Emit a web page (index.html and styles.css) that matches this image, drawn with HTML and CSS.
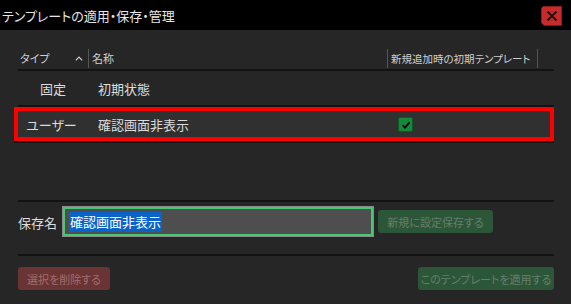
FILE: index.html
```html
<!DOCTYPE html>
<html lang="ja">
<head>
  <meta charset="UTF-8" />
  <title>テンプレートの適用・保存・管理</title>
  <link rel="stylesheet" href="styles.css">
</head>
<body>
  <div class="titlebar">
    <span class="title">テンプレートの適用・保存・管理</span>
    <button class="close">
      <svg width="12" height="12" viewBox="0 0 12 12"><path d="M1.5 1.5 L10.5 10.5 M10.5 1.5 L1.5 10.5" stroke="#2a1414" stroke-width="2.2" fill="none"/></svg>
    </button>
  </div>

  <div class="main">
    <div class="table">
      <div class="thead">
        <div class="col type">タイプ
          <svg class="sort" width="8" height="5" viewBox="0 0 8 5"><path d="M0.8 4.4 L4 1.2 L7.2 4.4" stroke="#d0d0d0" stroke-width="1.2" fill="none"/></svg>
        </div>
        <div class="col name">名称</div>
        <div class="col init">新規追加時の初期テンプレート</div>
      </div>
      <div class="row">
        <div class="col type">固定</div>
        <div class="col name">初期状態</div>
        <div class="col init"></div>
      </div>
      <div class="row selected">
        <div class="col type">ユーザー</div>
        <div class="col name">確認画面非表示</div>
        <div class="col init">
          <span class="check">
            <svg width="10" height="10" viewBox="0 0 10 10"><path d="M1.5 5.2 L4 7.6 L8.6 2.4" stroke="#000" stroke-width="1.8" fill="none"/></svg>
          </span>
        </div>
      </div>
    </div>

    <div class="save">
      <label>保存名</label>
      <div class="field"><span class="sel">確認画面非表示</span></div>
      <button class="btn green save-btn">新規に設定保存する</button>
    </div>

    <div class="actions">
      <button class="btn red">選択を削除する</button>
      <button class="btn green">このテンプレートを適用する</button>
    </div>
  </div>
</body>
</html>
```

FILE: styles.css
```css
body {
  margin: 0;
  width: 571px;
  height: 304px;
  overflow: hidden;
  background-color: #262626;
  color: #dcdcdc;
  font-family: "Noto Sans CJK JP", "Noto Sans", sans-serif;
  font-feature-settings: "palt";
  white-space: nowrap;
}
.titlebar {
  height: 30px;
  background-color: #000;
  display: flex;
  align-items: center;
  justify-content: space-between;
  padding: 0 9px 0 2px;
}
.title {
  font-size: 13px;
  color: #e6e6e6;
}
.close {
  width: 21px;
  height: 20px;
  margin-top: 1px;
  padding: 0;
  border: 1px solid #8a1c1c;
  background-color: #c62a2a;
  clip-path: polygon(3px 0, 100% 0, 100% 100%, 3px 100%, 0 calc(100% - 3px), 0 3px);
  display: flex;
  align-items: center;
  justify-content: center;
}

.main {
  padding: 17px 17px 0 18px;
}

/* Table */
.thead, .row {
  display: flex;
  align-items: center;
}
.thead {
  height: 22px;
  border-bottom: 2px solid #131313;
  font-size: 11px;
  color: #cfcfcf;
}
.thead .col {
  height: 19px;
  display: flex;
  align-items: center;
}
.col {
  flex-shrink: 0;
}
.col.type {
  width: 70px;
}
.col.name {
  width: 299px;
}
.col.init {
  width: 150px;
}
.thead .type {
  padding-left: 2px;
  width: 68px;
  position: relative;
}
.sort {
  position: absolute;
  left: 57px;
  top: 7px;
}
.thead .name, .thead .init {
  border-left: 1px solid #555;
  padding-left: 3px;
}
.thead .name {
  width: 295px;
}
.thead .init {
  width: 146px;
  border-right: 1px solid #555;
  font-size: 10.5px;
}
.row {
  height: 34px;
  border-bottom: 2px solid #131313;
  font-size: 13px;
}
.row .type {
  text-align: center;
}
.row .name {
  padding-left: 10px;
  width: 289px;
}
.row .init {
  padding-left: 11px;
  width: 139px;
}
.row.selected {
  box-sizing: border-box;
  height: 34px;
  margin-left: -4px;
  border: 4px solid #ff0000;
  background-color: #303030;
  box-shadow: 0 2px 0 #131313;
}
.row.selected .type {
  padding-right: 3px;
  width: 67px;
}
.check {
  width: 13px;
  height: 13px;
  background-color: #14893a;
  border: 1px solid #0c5a25;
  border-radius: 2px;
  display: flex;
  align-items: center;
  justify-content: center;
  margin-top: 1px;
}

/* Save name */
.save {
  margin-top: 59px;
  border-top: 2px solid #131313;
  border-bottom: 2px solid #131313;
  padding: 4px 0 17px;
  display: flex;
  align-items: center;
  font-size: 13px;
}
.save label {
  width: 44px;
  padding-top: 1px;
}
.field {
  box-sizing: border-box;
  width: 312px;
  height: 31px;
  border: 1px solid #8a8a8a;
  outline: 2px solid #45c872;
  outline-offset: -3px;
  background-color: #4e4e4e;
  display: flex;
  align-items: center;
  padding-left: 6px;
  font-size: 13px;
}
.sel {
  background-color: #0a63c9;
  color: #fff;
  line-height: 20px;
  padding: 0 1px;
}
.btn {
  height: 23px;
  border: none;
  border-radius: 3px;
  font-family: inherit;
  font-feature-settings: "palt";
  font-size: 11px;
  padding: 0;
  white-space: nowrap;
}
.btn.green {
  background-color: #2c5638;
  color: #667f6c;
}
.btn.red {
  background-color: #6a3434;
  color: #a26d6d;
}
.save-btn {
  margin-left: 4px;
  width: 115px;
}

.actions {
  margin-top: 11px;
  display: flex;
  justify-content: space-between;
}
.actions .red {
  width: 92px;
}
.actions .green {
  width: 136px;
}
```
